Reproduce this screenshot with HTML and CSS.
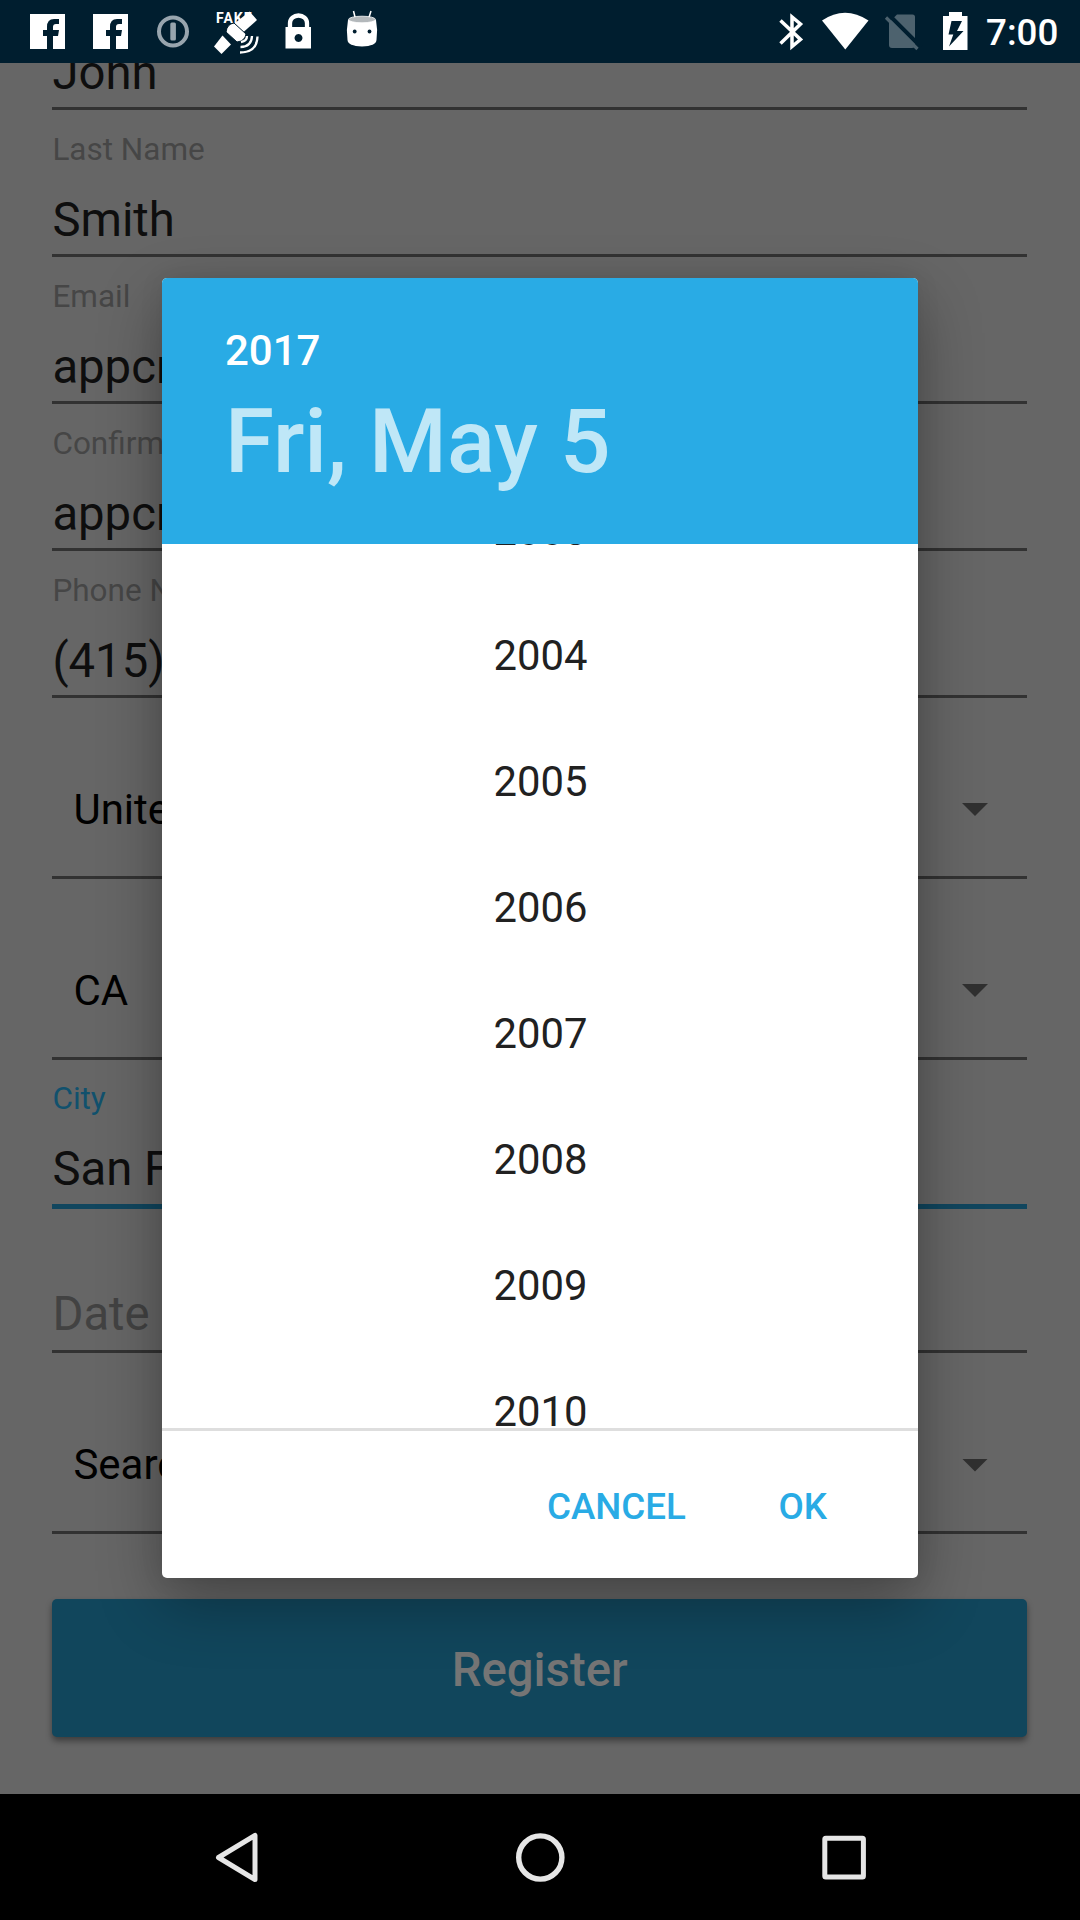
FILE: index.html
```html
<!DOCTYPE html>
<html lang="en">
<head>
<meta charset="utf-8">
<title>Register</title>
<link rel="stylesheet" href="styles.css">
</head>
<body>
<div class="screen">
  <header class="status">
    <div class="status-group">
      <svg class="notif" viewBox="16 0 63 63"><path fill="#fff" d="M30 14h35v35H53V36h5l1-6h-6v-3q0-3 3-3h3v-5h-5q-7 0-7 8v3h-4v6h4v13H30z"/></svg>
      <svg class="notif" viewBox="16 0 63 63"><path fill="#fff" d="M30 14h35v35H53V36h5l1-6h-6v-3q0-3 3-3h3v-5h-5q-7 0-7 8v3h-4v6h4v13H30z"/></svg>
      <svg class="notif" viewBox="142 0 63 63"><circle cx="173" cy="31.500" r="14" fill="none" stroke="#98a5ae" stroke-width="4"/><rect x="170.300" y="22.500" width="5.600" height="18" rx="1.500" fill="#98a5ae"/></svg>
      <svg class="notif" viewBox="205 0 63 63">
        <text class="fake" x="216" y="23">FAKE</text>
        <g fill="#fff">
          <path d="M249.500 11.500l7.500 8.500-14 12.500-8.500-9z"/><path d="M222.500 35.500l8.500 9-9.500 9.500-7.500-7.500z"/><path stroke="#001e2f" stroke-width="1" d="M234 23l12 11q-1 7-9 8l-11-10q1-8 8-9z"/>
        </g>
        <path fill="none" stroke="#fff" stroke-width="2.300" d="M241 42q6-1 6-6M240.500 47q11 0 11.500-11M240 52.500q17 0 17.500-16"/>
      </svg>
      <svg class="notif" viewBox="268 0 63 63"><path d="M290 29v-6a8.500 7.500 0 0 1 17 0v6" fill="none" stroke="#fff" stroke-width="4.300"/><path fill="#fff" fill-rule="evenodd" d="M285.500 27h25.500v21.500h-25.500zM298.500 34a4 4 0 1 0 .01 0z"/></svg>
      <svg class="notif" viewBox="331 0 63 63"><path stroke="#fff" stroke-width="1.500" d="M353.500 11l2 8M371 11l-2.500 8"/><path fill="#fff" d="M348 20h28q2 10 .5 20-.5 6-14.500 6.500-14-.5-14.500-6.500-1.500-10 .5-20z"/><ellipse cx="362" cy="19.500" rx="13.500" ry="3.300" fill="#b3b8bb" stroke="#fff" stroke-width=".8"/><circle cx="354.700" cy="31.500" r="1.900" fill="#001e2f"/><circle cx="369.500" cy="31.500" r="1.900" fill="#001e2f"/></svg>
    </div>
    <div class="status-group">
      <svg class="sys" viewBox="765 0 54 63"><path fill="none" stroke="#fff" stroke-width="3.500" d="M780.500 20.500L800.500 39.500 792 46.500V17l8.500 7-20 19.500"/></svg>
      <svg class="sys" viewBox="819 0 54 63"><path fill="#fff" d="M822 20.500q23-15.500 46.500 0L845.300 49.500z"/></svg>
      <svg class="sys" viewBox="873 0 54 63"><path fill="#4d626e" d="M897 14.500h15.500q2.500 0 2.500 2.500v28q0 3-3 3h-20q-3 0-3-3V22.500z"/><path stroke="#001e2f" stroke-width="4" d="M889 15l32 32"/><path stroke="#4d626e" stroke-width="3.200" d="M886 17.500l31.500 31.500"/></svg>
      <svg class="sys" viewBox="927 0 54 63"><path fill="#fff" fill-rule="evenodd" d="M949 12h13v4h5.500v34H943V16h6zM951.500 21l-3 13.500h4.800l-4.300 12 14.500-15.500h-6.500l5-10z"/></svg>
      <span class="clock">7:00</span>
    </div>
  </header>

  <main class="form">
    <div class="field"><span class="value">John</span></div>
    <div class="field"><span class="label">Last Name</span><span class="value">Smith</span></div>
    <div class="field"><span class="label">Email</span><span class="value">appcr</span></div>
    <div class="field"><span class="label">Confirm</span><span class="value">appcr</span></div>
    <div class="field"><span class="label">Phone N</span><span class="value">(415)</span></div>
    <div class="spinner"><span>United</span><i class="arrow"></i></div>
    <div class="spinner"><span>CA</span><i class="arrow"></i></div>
    <div class="field focused"><span class="label">City</span><span class="value">San Fr</span></div>
    <div class="field empty"><span class="value">Date</span></div>
    <div class="spinner"><span>Search</span><i class="arrow"></i></div>
    <div class="register">Register</div>
  </main>

  <nav class="nav">
    <svg viewBox="206 1827 60 60"><path fill="none" stroke="#e6e6e6" stroke-width="5" stroke-linejoin="round" d="M218.500 1857.500L255 1835.500v44z"/></svg>
    <svg viewBox="510 1827 60 60"><circle cx="540.300" cy="1857.500" r="21.600" fill="none" stroke="#e6e6e6" stroke-width="5.400"/></svg>
    <svg viewBox="814 1827 60 60"><rect x="824.800" y="1838.300" width="38.600" height="38.600" rx="1" fill="none" stroke="#e6e6e6" stroke-width="5"/></svg>
  </nav>

  <section class="dialog">
    <div class="dialog-head">
      <div class="head-year">2017</div>
      <div class="head-date">Fri, May 5</div>
    </div>
    <div class="years">
      <div class="year">2003</div>
      <div class="year">2004</div>
      <div class="year">2005</div>
      <div class="year">2006</div>
      <div class="year">2007</div>
      <div class="year">2008</div>
      <div class="year">2009</div>
      <div class="year">2010</div>
    </div>
    <div class="actions"><span>CANCEL</span><span>OK</span></div>
  </section>
</div>
</body>
</html>
```
FILE: styles.css
```css
* { box-sizing: border-box; }
body { margin: 0; font-family: Roboto, "Liberation Sans", sans-serif; }
.screen {
  position: relative;
  display: flex;
  flex-direction: column;
  width: 1080px;
  height: 1920px;
  overflow: hidden;
  background: #666;
}

.status {
  display: flex;
  justify-content: space-between;
  flex: 0 0 63px;
  padding: 0 22px 0 16px;
  background: #001e2f;
}
.status-group { display: flex; height: 63px; }
.notif { width: 63px; height: 63px; }
.sys { width: 54px; height: 63px; }
.fake { font-size: 14px; font-weight: 700; letter-spacing: 1px; fill: #fff; }
.clock {
  width: 77px;
  height: 63px;
  padding: 3px 0 0 5px;
  font-size: 36.75px;
  font-weight: 500;
  line-height: 60px;
  color: #fff;
  white-space: nowrap;
}

.form {
  display: flex;
  flex-direction: column;
  flex: 0 0 1731px;
  padding: 0 53px 0 52.4px;
  overflow: hidden;
}
.field {
  display: flex;
  flex: 0 0 147px;
  flex-direction: column;
  justify-content: flex-end;
  gap: 23px;
  padding-bottom: 6px;
  border-bottom: 3px solid #323232;
}
.field:first-child { margin-top: -100px; }
.label { font-size: 31.5px; line-height: 37px; color: #464646; }
.value { font-size: 47.25px; line-height: 56px; color: #0e0e0e; white-space: nowrap; }
.field .label { margin-bottom: 1px; }
.focused { flex-basis: 149px; padding-bottom: 7px; border-bottom: 5px solid #11465e; }
.focused .label { color: #11516d; }
.empty { flex-basis: 144px; padding-bottom: 8px; }
.empty .value { color: #424242; }
.spinner {
  display: flex;
  flex: 0 0 181px;
  align-items: center;
  justify-content: space-between;
  padding: 45px 39px 0 21px;
  border-bottom: 3px solid #323232;
  font-size: 42px;
  line-height: 50px;
  color: #000;
}
.empty + .spinner { padding-top: 46px; }
.arrow {
  width: 26px;
  height: 13px;
  background: #303030;
  clip-path: polygon(0 0, 100% 0, 50% 100%);
}
.register {
  flex: 0 0 137px;
  margin-top: 65px;
  padding-top: 5px;
  border-radius: 5px;
  background: #11465c;
  box-shadow: 0 4px 6px rgba(0, 0, 0, .4);
  font-size: 47.25px;
  font-weight: 500;
  line-height: 133px;
  text-align: center;
  color: #757575;
}

.nav {
  display: flex;
  flex: 0 0 126px;
  justify-content: space-between;
  align-items: center;
  padding: 0 206px;
  background: #000;
}
.nav svg { width: 60px; height: 60px; }

.dialog {
  position: absolute;
  left: 162px;
  top: 278px;
  display: flex;
  flex-direction: column;
  width: 756px;
  height: 1300px;
  overflow: hidden;
  border-radius: 5px;
  background: #fff;
  box-shadow: 0 24px 64px rgba(0, 0, 0, .32), 0 0 24px rgba(0, 0, 0, .08);
}
.dialog-head {
  flex: 0 0 266px;
  padding: 48px 63px 0;
  background: #29abe5;
  font-weight: 500;
}
.head-year { font-size: 42px; line-height: 50px; color: #fff; }
.head-date { margin-top: 13px; font-size: 89px; line-height: 106px; color: #bfe7f7; white-space: nowrap; }
.years {
  display: flex;
  flex: 0 0 887px;
  flex-direction: column;
  overflow: hidden;
  border-bottom: 3px solid #dedede;
}
.year {
  flex: 0 0 126px;
  padding-left: 1px;
  font-size: 41.8px;
  line-height: 126px;
  text-align: center;
  color: #212121;
}
.year:first-child { height: 126px; margin-top: -77px; line-height: 128px; }
.actions {
  display: flex;
  flex: 1;
  justify-content: flex-end;
  gap: 92.5px;
  padding: 54px 91px 0 0;
  font-size: 36.75px;
  font-weight: 500;
  line-height: 44px;
  color: #29abe5;
}
```
